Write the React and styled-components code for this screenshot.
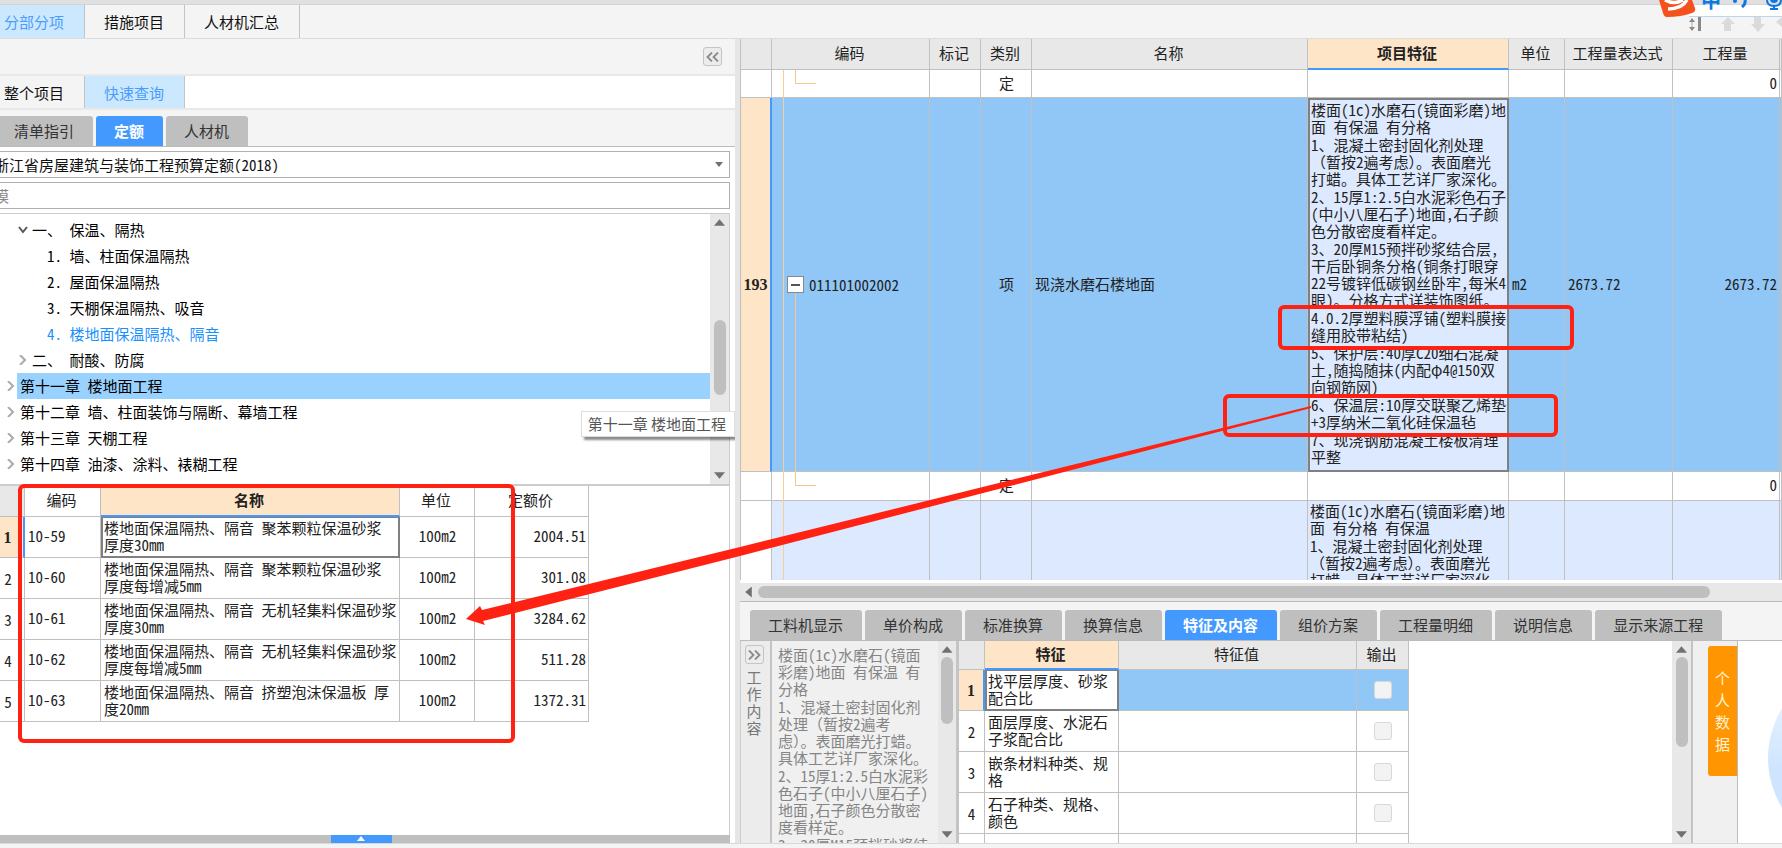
import React, { useState } from 'react';
import styled, { createGlobalStyle, css } from 'styled-components';

const quotas = [
  { code: '10-59', name: ['楼地面保温隔热、隔音 聚苯颗粒保温砂浆', '厚度30mm'], unit: '100m2', price: '2004.51' },
  { code: '10-60', name: ['楼地面保温隔热、隔音 聚苯颗粒保温砂浆', '厚度每增减5mm'], unit: '100m2', price: '301.08' },
  { code: '10-61', name: ['楼地面保温隔热、隔音 无机轻集料保温砂浆', '厚度30mm'], unit: '100m2', price: '3284.62' },
  { code: '10-62', name: ['楼地面保温隔热、隔音 无机轻集料保温砂浆', '厚度每增减5mm'], unit: '100m2', price: '511.28' },
  { code: '10-63', name: ['楼地面保温隔热、隔音 挤塑泡沫保温板 厚', '度20mm'], unit: '100m2', price: '1372.31' },
];

const chapters = [
  { level: 1, mark: 'open', text: '一、 保温、隔热' },
  { level: 2, text: '1. 墙、柱面保温隔热' },
  { level: 2, text: '2. 屋面保温隔热' },
  { level: 2, text: '3. 天棚保温隔热、吸音' },
  { level: 2, text: '4. 楼地面保温隔热、隔音', current: true },
  { level: 1, mark: 'closed', text: '二、 耐酸、防腐' },
  { level: 0, mark: 'closed', text: '第十一章 楼地面工程' },
  { level: 0, mark: 'closed', text: '第十二章 墙、柱面装饰与隔断、幕墙工程' },
  { level: 0, mark: 'closed', text: '第十三章 天棚工程' },
  { level: 0, mark: 'closed', text: '第十四章 油漆、涂料、裱糊工程' },
];

const itemFeature = [
  ['楼面(1c)水磨石(镜面彩磨)地', '面 有保温 有分格'],
  ['1、混凝土密封固化剂处理', '（暂按2遍考虑）。表面磨光', '打蜡。具体工艺详厂家深化。'],
  ['2、15厚1:2.5白水泥彩色石子', '(中小八厘石子)地面,石子颜', '色分散密度看样定。'],
  ['3、20厚M15预拌砂浆结合层,', '干后卧铜条分格(铜条打眼穿', '22号镀锌低碳钢丝卧牢,每米4', '眼)。分格方式详装饰图纸。'],
  ['4.0.2厚塑料膜浮铺(塑料膜接', '缝用胶带粘结)'],
  ['5、保护层:40厚C20细石混凝', '土,随捣随抹(内配φ4@150双', '向钢筋网)'],
  ['6、保温层:10厚交联聚乙烯垫', '+3厚纳米二氧化硅保温毡'],
  ['7、现浇钢筋混凝土楼板清理', '平整'],
];

const nextFeature = [
  ['楼面(1c)水磨石(镜面彩磨)地', '面 有分格 有保温'],
  ['1、混凝土密封固化剂处理', '（暂按2遍考虑）。表面磨光', '打蜡。具体工艺详厂家深化。'],
];

const workContent = [
  ['楼面(1c)水磨石(镜面', '彩磨)地面 有保温 有', '分格'],
  ['1、混凝土密封固化剂', '处理（暂按2遍考', '虑）。表面磨光打蜡。', '具体工艺详厂家深化。'],
  ['2、15厚1:2.5白水泥彩', '色石子(中小八厘石子)', '地面,石子颜色分散密', '度看样定。'],
  ['3、20厚M15预拌砂浆结'],
];

const features = [
  ['找平层厚度、砂浆', '配合比'],
  ['面层厚度、水泥石', '子浆配合比'],
  ['嵌条材料种类、规', '格'],
  ['石子种类、规格、', '颜色'],
];

const detailTabs = ['工料机显示', '单价构成', '标准换算', '换算信息', '特征及内容', '组价方案', '工程量明细', '说明信息', '显示来源工程'];

const Text = ({ blocks }) => (
  <Paragraphs>
    {blocks.map((lines, i) => <p key={i}>{lines.join('\n')}</p>)}
  </Paragraphs>
);

const VScroll = ({ width, offset, length }) => (
  <ScrollV $width={width}>
    <Arrow $dir='up' />
    <ThumbV $offset={offset} $length={length} />
    <Arrow $dir='down' />
  </ScrollV>
);

const Chevron = ({ open }) => (
  <svg width='10' height='10' viewBox='0 0 10 10' fill='none' stroke={open ? '#555' : '#aaa'} strokeWidth='2'>
    <path d={open ? 'M1 2 L5 7 L9 2' : 'M2 0 L7 5 L2 10'} />
  </svg>
);

const DoubleAngle = ({ right }) => (
  <svg width='13' height='10' viewBox='0 0 13 10' fill='none' stroke='#8a8a8a' strokeWidth='1.8'>
    <path d={right ? 'M1 0.5 L5.5 5 L1 9.5 M7 0.5 L11.5 5 L7 9.5' : 'M6 0.5 L1.5 5 L6 9.5 M12 0.5 L7.5 5 L12 9.5'} />
  </svg>
);

const QuickQuery = () => {
  const [tab, setTab] = useState('定额');
  const [selected, setSelected] = useState(6);

  return (
    <Left>
      <LeftTools>
        <SquareButton aria-label='收起'><DoubleAngle /></SquareButton>
      </LeftTools>
      <SubTabs>
        <PlainTab>整个项目</PlainTab>
        <PlainTab $active>快速查询</PlainTab>
      </SubTabs>
      <LibraryTabs>
        {['清单指引', '定额', '人材机'].map(name => (
          <BlockTab key={name} $active={tab === name} onClick={() => { setTab(name); }}>{name}</BlockTab>
        ))}
      </LibraryTabs>
      <Library>
        <SelectBox>
          <select aria-label='定额库'>
            <option>浙江省房屋建筑与装饰工程预算定额(2018)</option>
          </select>
          <Arrow $dir='down' $small />
        </SelectBox>
        <SearchInput aria-label='查询' placeholder='模' />
        <TreeBox>
          <Tree>
            {chapters.map((c, i) => (
              <TreeRow key={c.text} $level={c.level} onClick={() => { setSelected(i); }}>
                <TreeMark>{c.mark && <Chevron open={c.mark === 'open'} />}</TreeMark>
                <TreeLabel $current={c.current} $selected={selected === i}>{c.text}</TreeLabel>
              </TreeRow>
            ))}
          </Tree>
          <VScroll width={19} offset={90} length={75} />
          <Tooltip>第十一章 楼地面工程</Tooltip>
        </TreeBox>
        <QuotaArea>
          <QuotaTable>
            <colgroup>
              <col width='33' /><col width='76' /><col width='299' /><col width='75' /><col width='114' />
            </colgroup>
            <thead>
              <tr>
                <Th $grey $h={31}></Th>
                <Th>编码</Th>
                <Th $hot>名称</Th>
                <Th>单位</Th>
                <Th>定额价</Th>
              </tr>
            </thead>
            <tbody>
              {quotas.map((q, i) => (
                <tr key={q.code}>
                  <RowNo $hot={i === 0}>{i + 1}</RowNo>
                  <Td $h={41}>{q.code}</Td>
                  <Td $focus={i === 0}>{q.name.join('\n')}</Td>
                  <Td $align='center'>{q.unit}</Td>
                  <Td $align='right'>{q.price}</Td>
                </tr>
              ))}
            </tbody>
          </QuotaTable>
        </QuotaArea>
        <DrawerBar>
          <DrawerHandle aria-label='展开'>
            <svg width='10' height='6' viewBox='0 0 10 6'><path d='M5 0 L9 5 H1 Z' fill='#fff' /></svg>
          </DrawerHandle>
        </DrawerBar>
      </Library>
    </Left>
  );
};

const ItemGrid = () => (
  <GridArea>
    <ItemTable>
      <colgroup>
        <col width='31' /><col width='158' /><col width='51' /><col width='51' /><col />
        <col width='201' /><col width='56' /><col width='108' /><col width='107' /><col width='2' />
      </colgroup>
      <thead>
        <tr>
          <Th $grey $h={31}></Th>
          <Th $grey>编码</Th>
          <Th $grey>标记</Th>
          <Th $grey>类别</Th>
          <Th $grey>名称</Th>
          <Th $hot>项目特征</Th>
          <Th $grey>单位</Th>
          <Th $grey>工程量表达式</Th>
          <Th $grey>工程量</Th>
          <Th $grey></Th>
        </tr>
      </thead>
      <tbody>
        <tr>
          <RowNo></RowNo>
          <CodeTd $h={28}><Trunk /><Branch /></CodeTd>
          <Td></Td>
          <Td $align='center'>定</Td>
          <Td></Td><Td></Td><Td></Td><Td></Td>
          <Td $align='right'>0</Td>
          <Td></Td>
        </tr>
        <tr>
          <RowNo $hot>193</RowNo>
          <CodeTd $bg='#91c7f7' $h={374}>
            <Trunk /><Stem />
            <CodeLine>
              <Expander aria-label='折叠'>
                <svg width='9' height='2'><rect width='9' height='2' fill='#555' /></svg>
              </Expander>
              011101002002
            </CodeLine>
          </CodeTd>
          <Td $bg='#91c7f7'></Td>
          <Td $bg='#91c7f7' $align='center'>项</Td>
          <Td $bg='#91c7f7'>现浇水磨石楼地面</Td>
          <Td $bg='#dde9fe' $focus $top><Text blocks={itemFeature} /></Td>
          <Td $bg='#91c7f7'>m2</Td>
          <Td $bg='#91c7f7'>2673.72</Td>
          <Td $bg='#91c7f7' $align='right'>2673.72</Td>
          <Td $bg='#91c7f7'></Td>
        </tr>
        <tr>
          <RowNo></RowNo>
          <CodeTd $h={29}><Trunk /><Branch /></CodeTd>
          <Td></Td>
          <Td $align='center'>定</Td>
          <Td></Td><Td></Td><Td></Td><Td></Td>
          <Td $align='right'>0</Td>
          <Td></Td>
        </tr>
        <tr>
          <RowNo></RowNo>
          <CodeTd $bg='#dde9fe'><Trunk /></CodeTd>
          <Td $bg='#dde9fe'></Td>
          <Td $bg='#dde9fe'></Td>
          <Td $bg='#dde9fe'></Td>
          <Td $bg='#dde9fe' $top><Text blocks={nextFeature} /></Td>
          <Td $bg='#dde9fe'></Td>
          <Td $bg='#dde9fe'></Td>
          <Td $bg='#dde9fe'></Td>
          <Td $bg='#dde9fe'></Td>
        </tr>
      </tbody>
    </ItemTable>
  </GridArea>
);

const Details = () => {
  const [tab, setTab] = useState('特征及内容');

  return (
    <DetailArea>
      <DetailTabs>
        {detailTabs.map(name => (
          <BlockTab key={name} $active={tab === name} onClick={() => { setTab(name); }}>{name}</BlockTab>
        ))}
      </DetailTabs>
      <DetailBody>
        <SideStrip>
          <SquareButton aria-label='展开'><DoubleAngle right /></SquareButton>
          <StackedText>工作内容</StackedText>
        </SideStrip>
        <WorkContent>
          <WorkText><Text blocks={workContent} /></WorkText>
          <VScroll width={18} offset={0} length={67} />
        </WorkContent>
        <FeatureArea>
          <FeatureTable>
            <colgroup>
              <col width='26' /><col width='134' /><col width='238' /><col width='52' />
            </colgroup>
            <thead>
              <tr>
                <Th $grey $h={29}></Th>
                <Th $hot>特征</Th>
                <Th $grey>特征值</Th>
                <Th $grey>输出</Th>
              </tr>
            </thead>
            <tbody>
              {features.map((f, i) => (
                <tr key={f[0]}>
                  <RowNo $hot={i === 0}>{i + 1}</RowNo>
                  <Td $h={41} $focus={i === 0}>{f.join('\n')}</Td>
                  <Td $bg={i === 0 ? '#91c7f7' : '#fff'}></Td>
                  <Td $bg={i === 0 ? '#91c7f7' : '#fff'} $align='center'>
                    <Check type='checkbox' aria-label={'输出 ' + f.join('')} />
                  </Td>
                </tr>
              ))}
              <tr>
                <RowNo></RowNo>
                <Td $h={41}></Td>
                <Td></Td>
                <Td></Td>
              </tr>
            </tbody>
          </FeatureTable>
        </FeatureArea>
        <VScroll width={19} offset={0} length={90} />
        <PersonalStrip>
          <PersonalButton><StackedText $wide>个人数据</StackedText></PersonalButton>
        </PersonalStrip>
        <ChartPane>
          <svg width='44' height='202' viewBox='0 0 44 202'>
            <defs>
              <linearGradient id='disc' x1='0' y1='0' x2='0' y2='1'>
                <stop offset='0' stopColor='#f2f8ff' />
                <stop offset='0.55' stopColor='#cfe5ff' />
                <stop offset='1' stopColor='#cfe5ff' />
              </linearGradient>
            </defs>
            <circle cx='125' cy='117' r='95' fill='url(#disc)' />
          </svg>
        </ChartPane>
      </DetailBody>
    </DetailArea>
  );
};

const ImeBar = () => (
  <Ime>
    <svg width='38' height='17' viewBox='0 0 38 17'>
      <path d='M0 0 H33 L36 8 Q37 12 33 13 Q22 17 8 17 Q5 17 4 13 Z' fill='#f4511e' />
      <path d='M6 0 Q15 5 24 0 M9 9 Q23 9 28 0' fill='none' stroke='#fff' strokeWidth='3.5' />
    </svg>
    <ImeText>中</ImeText>
    <svg width='80' height='15' viewBox='0 0 80 15' fill='none' stroke='#0b78e3'>
      <circle cx='14' cy='1' r='2' fill='#0b78e3' stroke='none' />
      <path d='M24 0 Q25 4 21 7' strokeWidth='3' />
      <path d='M46 0 Q46 6 53 6 Q60 6 60 0' strokeWidth='2' />
      <rect x='49' y='-8' width='8' height='11' rx='4' fill='#0b78e3' stroke='none' />
      <path d='M53 6 V10 M49 9 H57' strokeWidth='2' />
    </svg>
  </Ime>
);

const App = () => {
  return (
    <Page>
      <GlobalStyle />
      <TopEdge />
      <MainTabs>
        <PlainTab $active>分部分项</PlainTab>
        <PlainTab>措施项目</PlainTab>
        <PlainTab>人材机汇总</PlainTab>
        <Tools>
          <svg width='97' height='18' viewBox='0 0 97 18'>
            <path d='M4 5 L7 1 L10 5 Z M4 10 L7 14 L10 10 Z' fill='#8a8a8a' />
            <path d='M7 5 V10' stroke='#aaa' />
            <rect x='13' y='0' width='3' height='14' fill='#8a8a8a' />
            <path d='M43 0 L50 7 H46 V14 H39 V7 H36 Z M69 0 H76 V7 H80 L73 15 L66 7 H69 Z M97 0 L91 5 L97 10 Z' fill='#dadada' />
          </svg>
        </Tools>
      </MainTabs>
      <Columns>
        <QuickQuery />
        <Right>
          <ItemGrid />
          <ScrollH>
            <Arrow $dir='left' />
            <ThumbH />
          </ScrollH>
          <Details />
        </Right>
      </Columns>
      <Footer />
      <ImeBar />
      <Annotations width='1600' height='760' viewBox='0 0 1600 760'>
        <g fill='none' stroke='#ff2213' strokeWidth='4'>
          <rect x='20' y='486' width='493' height='255' rx='4' />
          <rect x='1280' y='307' width='292' height='41' rx='4' />
          <rect x='1225' y='396' width='331' height='39' rx='4' />
        </g>
        <path d='M1311 406 L740 547 L482 610 L480 606 L466 619 L485 625 L483 621 L740 556 L1311 408 Z' fill='#ff2213' />
      </Annotations>
    </Page>
  );
};

export default App;


const GlobalStyle = createGlobalStyle`
* {
  box-sizing: border-box;
}

body {
  margin: 0;
  background: #f4f4f4;
}

body, button, input, select, table {
  font-family: "Noto Sans Mono CJK SC", "Noto Sans CJK SC", sans-serif;
  font-size: 15px;
  line-height: 17px;
  color: #222;
}

button {
  border: 0;
  padding: 0;
  cursor: pointer;
}

svg {
  display: block;
  flex: none;
}
`;

const Page = styled.div`
position: relative;
display: flex;
flex-direction: column;
height: 100vh;
overflow: hidden;
`;

const TopEdge = styled.div`
flex: none;
height: 5px;
background: #e0e0e0;
border-bottom: 1px solid #d4d4d4;
`;

const MainTabs = styled.nav`
flex: none;
display: flex;
height: 34px;
margin-left: -15px;
border-bottom: 1px solid #dcdcdc;
`;

const PlainTab = styled.button`
padding: 0 20px 0 19px;
border-right: 1px solid #c4c4c4;
background: ${props => props.$active ? '#cce8ff' : '#f4f4f4'};
color: ${props => props.$active ? '#4a9dfc' : '#111'};
`;

const Tools = styled.div`
margin-left: auto;
padding-top: 12px;
`;

const Columns = styled.main`
flex: 1;
min-height: 0;
display: grid;
grid-template-columns: minmax(0, 740fr) minmax(0, 1042fr);
`;

const Left = styled.section`
display: flex;
flex-direction: column;
min-height: 0;
border-right: 5px solid #e6e6e6;
`;

const LeftTools = styled.div`
flex: none;
display: flex;
justify-content: flex-end;
align-items: center;
height: 37px;
padding-right: 13px;
border-bottom: 2px solid #e8e8e8;
`;

const SquareButton = styled.button`
display: grid;
place-items: center;
width: 19px;
height: 19px;
border: 1px solid #c4c4c4;
border-radius: 3px;
background: #ececec;
`;

const SubTabs = styled.div`
flex: none;
display: flex;
height: 34px;
margin-left: -15px;
background: #fff;
border-bottom: 2px solid #e8e8e8;
`;

const LibraryTabs = styled.div`
flex: none;
display: flex;
align-items: flex-end;
gap: 3px;
height: 37px;
margin-left: -4px;
border-bottom: 1px solid #bbb;
`;

const BlockTab = styled.button`
height: 30px;
padding: 0 19px 2px 18px;
border-radius: 3px 3px 0 0;
background: ${props => props.$active ? '#4499ff' : '#bfbfbf'};
color: ${props => props.$active ? '#fff' : '#333'};
font-weight: ${props => props.$active ? 700 : 400};
`;

const Library = styled.div`
flex: 1;
min-height: 0;
display: flex;
flex-direction: column;
padding-right: 5px;
padding-top: 4px;
background: #fff;
overflow: hidden;
`;

const field = css`
flex: none;
height: 27px;
margin-left: -10px;
border: 1px solid #b0b0b0;
background: #fff;
`;

const SelectBox = styled.div`
${field}
display: flex;
align-items: center;
padding-right: 6px;

select {
  flex: 1;
  appearance: none;
  border: 0;
  padding: 0 3px;
  background: transparent;
  color: #111;
}
`;

const SearchInput = styled.input`
${field}
margin-top: 4px;
padding: 0 3px;

&::placeholder {
  color: #888;
}
`;

const TreeBox = styled.div`
position: relative;
flex: none;
display: flex;
height: 272px;
margin-top: 4px;
border: 1px solid #ccc;
border-left: 0;
`;

const Tree = styled.ul`
flex: 1;
margin: 0;
padding: 3px 0 0;
list-style: none;
`;

const indents = ['4px', '16px', '31px'];

const TreeRow = styled.li`
display: flex;
height: 26px;
padding-left: ${props => indents[props.$level]};
white-space: pre;
cursor: default;
`;

const TreeMark = styled.span`
flex: none;
display: grid;
place-items: center;
width: 13px;
`;

const TreeLabel = styled.span`
flex: 1;
padding-left: 3px;
line-height: 25px;
color: ${props => props.$current ? '#1a90ff' : '#000'};
background: ${props => props.$selected ? '#99d1ff' : 'transparent'};
`;

const Tooltip = styled.div`
position: absolute;
right: -6px;
top: 197px;
z-index: 2;
padding: 3px 8px 4px 6px;
background: #fff;
border: 1px solid #ddd;
box-shadow: 3px 3px 2px rgba(0, 0, 0, 0.45);
color: #555;
font-family: "Noto Sans CJK SC", sans-serif;
`;

const ScrollV = styled.div`
flex: none;
display: flex;
flex-direction: column;
align-items: center;
width: ${props => props.$width}px;
padding: 3px 0;
background: #e8e8e8;
`;

const ThumbV = styled.div`
width: 12px;
height: ${props => props.$length}px;
margin-top: ${props => props.$offset + 2}px;
margin-bottom: auto;
border-radius: 6px;
background: #bfbfbf;
`;

const shapes = {
  up: 'polygon(50% 20%, 100% 80%, 0 80%)',
  down: 'polygon(0 20%, 100% 20%, 50% 80%)',
  left: 'polygon(80% 0, 80% 100%, 20% 50%)',
};

const Arrow = styled.i`
flex: none;
width: ${props => props.$small ? 8 : 11}px;
height: ${props => props.$small ? 8 : 11}px;
background: #707078;
clip-path: ${props => shapes[props.$dir]};
`;

const QuotaArea = styled.div`
flex: 1;
min-height: 0;
overflow: hidden;
border: 1px solid #ccc;
border-left: 0;
border-bottom: 0;
`;

const tableBase = css`
table-layout: fixed;
border-collapse: separate;
border-spacing: 0;
`;

const QuotaTable = styled.table`
${tableBase}
width: 597px;
margin-left: -8px;
`;

const Th = styled.th`
height: ${props => props.$h ? props.$h + 'px' : 'auto'};
padding: 0 2px 3px 0;
font-weight: ${props => props.$hot ? 700 : 400};
background: ${props => props.$hot ? '#ffe5c7' : props.$grey ? '#e8e8e8' : '#fff'};
border-right: 1px solid #c0c0c0;
border-bottom: ${props => props.$hot ? '2px solid #4499ff' : '1px solid #c0c0c0'};
`;

const Td = styled.td`
height: ${props => props.$h ? props.$h + 'px' : 'auto'};
padding: ${props => props.$top ? '1px 2px' : '0 2px 3px 3px'};
vertical-align: ${props => props.$top ? 'top' : 'middle'};
text-align: ${props => props.$align || 'left'};
white-space: pre;
background: ${props => props.$bg || '#fff'};
border-right: 1px solid #c0c0c0;
border-bottom: 1px solid #c0c0c0;
${props => props.$focus && css`
  padding-left: 1px;
  padding-right: 0;
  border: 2px solid #808080;
  border-top-width: ${props.$top ? 2 : 1}px;
`}
`;

const CodeTd = styled(Td)`
position: relative;
padding: 0;
`;

const RowNo = styled.td`
padding: 0;
text-align: center;
background: ${props => props.$hot ? '#ffe5c7' : '#fff'};
border-right: ${props => props.$hot ? '2px solid #4499ff' : '1px solid #c0c0c0'};
border-bottom: 1px solid #c0c0c0;
${props => props.$hot && css`
  font-family: "Liberation Serif", serif;
  font-size: 16px;
  font-weight: 700;
`}
`;

const Paragraphs = styled.div`
display: flex;
flex-direction: column;
gap: 1px;
white-space: pre;

p {
  margin: 0;
}
`;

// tree lines in the code column
const Trunk = styled.i`
position: absolute;
left: 11px;
top: 0;
bottom: -1px;
border-left: 1px solid #f6cf98;
`;

const Branch = styled.i`
position: absolute;
left: 23px;
top: 0;
width: 21px;
height: 50%;
border-left: 1px solid #f6c88a;
border-bottom: 1px solid #f6c88a;
`;

const Stem = styled.i`
position: absolute;
left: 23px;
top: 50%;
bottom: -1px;
border-left: 1px solid #f6c88a;
`;

const CodeLine = styled.div`
position: relative;
display: flex;
align-items: center;
gap: 5px;
padding-left: 15px;
`;

const Expander = styled.button`
display: grid;
place-items: center;
width: 17px;
height: 17px;
border: 1px solid #888;
background: #fff;
`;

const Right = styled.section`
display: flex;
flex-direction: column;
min-height: 0;
min-width: 0;
`;

const GridArea = styled.div`
flex: 1;
min-height: 0;
overflow: hidden;
background: #fff;
border-left: 1px solid #c0c0c0;
`;

const ItemTable = styled.table`
${tableBase}
width: 100%;
`;

const ScrollH = styled.div`
flex: none;
display: flex;
align-items: center;
gap: 4px;
height: 22px;
padding-left: 3px;
border-top: 3px solid #fff;
border-bottom: 1px solid #bbb;
background: #e8e8e8;
`;

const ThumbH = styled.div`
flex: 1;
height: 12px;
margin-right: 72px;
border-radius: 6px;
background: #bfbfbf;
`;

const DetailArea = styled.div`
flex: none;
height: 241px;
display: flex;
flex-direction: column;
`;

const DetailTabs = styled.div`
flex: none;
display: flex;
align-items: flex-end;
gap: 3px;
height: 39px;
padding-left: 10px;
border-bottom: 1px solid #bbb;
`;

const DetailBody = styled.div`
flex: 1;
min-height: 0;
display: flex;
`;

const SideStrip = styled.div`
flex: none;
display: flex;
flex-direction: column;
align-items: center;
gap: 4px;
width: 32px;
padding: 4px 3px 0 0;
border-left: 1px solid #ccc;
border-right: 2px solid #c4c4c4;
background: #ececec;
color: #777;
`;

const StackedText = styled.span`
width: 15px;
line-height: ${props => props.$wide ? 22 : 17}px;
word-break: break-all;
`;

const WorkContent = styled.div`
flex: none;
display: flex;
width: 187px;
overflow: hidden;
border-right: 3px solid #c4c4c4;
background: #f0f0f0;
color: #858585;
`;

const WorkText = styled.div`
flex: 1;
min-width: 0;
padding: 5px 0 0 6px;
`;

const FeatureArea = styled.div`
flex: 1;
min-width: 0;
overflow: hidden;
background: #fff;
`;

const FeatureTable = styled.table`
${tableBase}
width: 450px;
`;

const Check = styled.input`
appearance: none;
display: block;
width: 18px;
height: 18px;
margin: 2px auto 0;
border: 1px solid #d8d8d8;
border-radius: 3px;
background: #f3f3f3;
`;

const PersonalStrip = styled.div`
flex: none;
display: flex;
justify-content: flex-end;
align-items: flex-start;
width: 46px;
padding-top: 5px;
border-left: 2px solid #c4c4c4;
background: #f0f0f0;
`;

const PersonalButton = styled.button`
display: grid;
place-items: center;
width: 29px;
height: 130px;
border-radius: 3px 0 0 3px;
background: #ff9500;

span {
  color: #fff3d0;
}
`;

const ChartPane = styled.div`
flex: none;
width: 45px;
overflow: hidden;
border-left: 1px solid #bbb;
background: #fff;
`;

const DrawerBar = styled.div`
flex: none;
display: flex;
justify-content: center;
height: 8px;
padding-right: 8px;
background: #bfbfbf;
`;

const DrawerHandle = styled.button`
display: grid;
place-items: center;
width: 61px;
height: 8px;
background: #4499ff;
`;

const Footer = styled.footer`
flex: none;
height: 5px;
border-top: 1px solid #d8d8d8;
background: #f4f4f4;
`;

const Ime = styled.div`
position: absolute;
top: 0;
right: 0;
display: flex;
width: 123px;
height: 17px;
overflow: hidden;

&::before {
  content: '';
  position: absolute;
  z-index: -1;
  left: 30px;
  right: 0;
  height: 16px;
  background: #fff;
  border-bottom: 1px solid #bcd6ee;
}
`;

const ImeText = styled.span`
margin-left: 4px;
font-size: 20px;
font-weight: 700;
line-height: 0;
color: #0b78e3;
`;

const Annotations = styled.svg`
position: absolute;
left: 0;
top: 0;
z-index: 5;
pointer-events: none;
`;
